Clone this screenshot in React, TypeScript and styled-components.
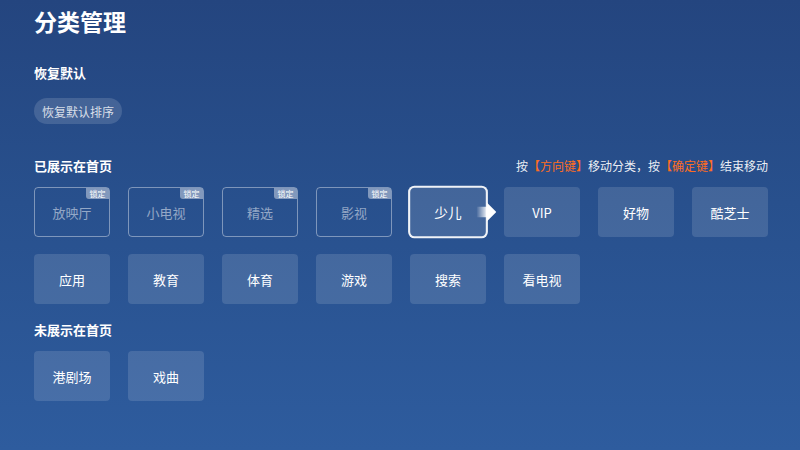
import React, { FC } from 'react'
import styled, { createGlobalStyle } from 'styled-components'

const GlobalStyle = createGlobalStyle`
  html, body {
    margin: 0;
    padding: 0;
  }
  body {
    font-family: "Noto Sans CJK SC", "Noto Sans", sans-serif;
    color: #fff;
  }
`

interface Tile {
  name: string
  locked?: boolean
  focused?: boolean
}

const shown: Tile[] = [
  { name: '放映厅', locked: true },
  { name: '小电视', locked: true },
  { name: '精选', locked: true },
  { name: '影视', locked: true },
  { name: '少儿', focused: true },
  { name: 'VIP' },
  { name: '好物' },
  { name: '酷芝士' },
  { name: '应用' },
  { name: '教育' },
  { name: '体育' },
  { name: '游戏' },
  { name: '搜索' },
  { name: '看电视' },
]

const hidden: Tile[] = [{ name: '港剧场' }, { name: '戏曲' }]

const Page = styled.div`
  width: 800px;
  height: 450px;
  box-sizing: border-box;
  padding: 6px 32px 0 34px;
  background: linear-gradient(180deg, #24457f 0%, #28508d 45%, #2e5c9e 100%);
  overflow: hidden;
`

const Title = styled.h1`
  margin: 0;
  font-size: 23px;
  line-height: 30px;
  font-weight: 700;
`

const SectionLabel = styled.div<{ $top: number }>`
  margin-top: ${(p) => p.$top}px;
  font-size: 13px;
  line-height: 20px;
  font-weight: 700;
`

const PillButton = styled.div`
  display: inline-flex;
  align-items: center;
  margin-top: 15px;
  height: 26px;
  padding: 0 8px;
  border-radius: 13px;
  background: rgba(255, 255, 255, 0.14);
  color: rgba(255, 255, 255, 0.8);
  font-size: 12px;
`

const HeaderRow = styled.div`
  display: flex;
  justify-content: space-between;
  align-items: center;
  margin-top: 32px;
`

const Hint = styled.div`
  font-size: 12px;
  line-height: 20px;
  color: rgba(255, 255, 255, 0.92);
`

const Key = styled.span`
  color: #ff6d1f;
`

const Grid = styled.div`
  display: grid;
  grid-template-columns: repeat(8, 76px);
  grid-auto-rows: 50px;
  column-gap: 18px;
  row-gap: 17px;
  margin-top: 11px;
`

const Card = styled.div<{ $locked?: boolean; $focused?: boolean }>`
  position: relative;
  display: flex;
  align-items: center;
  justify-content: center;
  box-sizing: border-box;
  border-radius: ${(p) => (p.$focused ? 6 : 4)}px;
  font-size: 13px;
  color: ${(p) => (p.$locked ? 'rgba(255,255,255,0.5)' : '#fff')};
  background: ${(p) => (p.$locked ? 'transparent' : 'rgba(255,255,255,0.13)')};
  border: ${(p) =>
    p.$focused
      ? '2px solid rgba(255,255,255,0.92)'
      : p.$locked
      ? '1px solid rgba(255,255,255,0.4)'
      : 'none'};
  transform: ${(p) => (p.$focused ? 'scale(1.05)' : 'none')};
`

const Badge = styled.span`
  position: absolute;
  top: 0;
  right: 0;
  width: 23px;
  height: 11px;
  display: flex;
  align-items: center;
  justify-content: center;
  background: rgba(255, 255, 255, 0.42);
  color: #fff;
  font-size: 8px;
  border-radius: 0 3px 0 3px;
`

const Arrow = styled.svg`
  position: absolute;
  right: -10px;
  top: 50%;
  margin-top: -9px;
`

const MoveArrow: FC = () => (
  <Arrow width="19" height="18" viewBox="0 0 19 18">
    <defs>
      <linearGradient id="tail" x1="0" x2="1" y1="0" y2="0">
        <stop offset="0" stopColor="#fff" stopOpacity="0" />
        <stop offset="1" stopColor="#fff" stopOpacity="1" />
      </linearGradient>
    </defs>
    <rect x="0" y="4" width="11" height="10" fill="url(#tail)" />
    <polygon points="10,0 19,9 10,18" fill="#fff" />
  </Arrow>
)

const TileCard: FC<{ tile: Tile }> = ({ tile }) => (
  <Card $locked={tile.locked} $focused={tile.focused}>
    {tile.name}
    {tile.locked && <Badge>锁定</Badge>}
    {tile.focused && <MoveArrow />}
  </Card>
)

const App: FC = () => (
  <>
    <GlobalStyle />
    <Page>
      <Title>分类管理</Title>
      <SectionLabel $top={27}>恢复默认</SectionLabel>
      <PillButton>恢复默认排序</PillButton>
      <HeaderRow>
        <SectionLabel $top={0}>已展示在首页</SectionLabel>
        <Hint>
          按<Key>【方向键】</Key>移动分类，按<Key>【确定键】</Key>结束移动
        </Hint>
      </HeaderRow>
      <Grid>
        {shown.map((t) => (
          <TileCard key={t.name} tile={t} />
        ))}
      </Grid>
      <SectionLabel $top={16}>未展示在首页</SectionLabel>
      <Grid>
        {hidden.map((t) => (
          <TileCard key={t.name} tile={t} />
        ))}
      </Grid>
    </Page>
  </>
)

export default App
